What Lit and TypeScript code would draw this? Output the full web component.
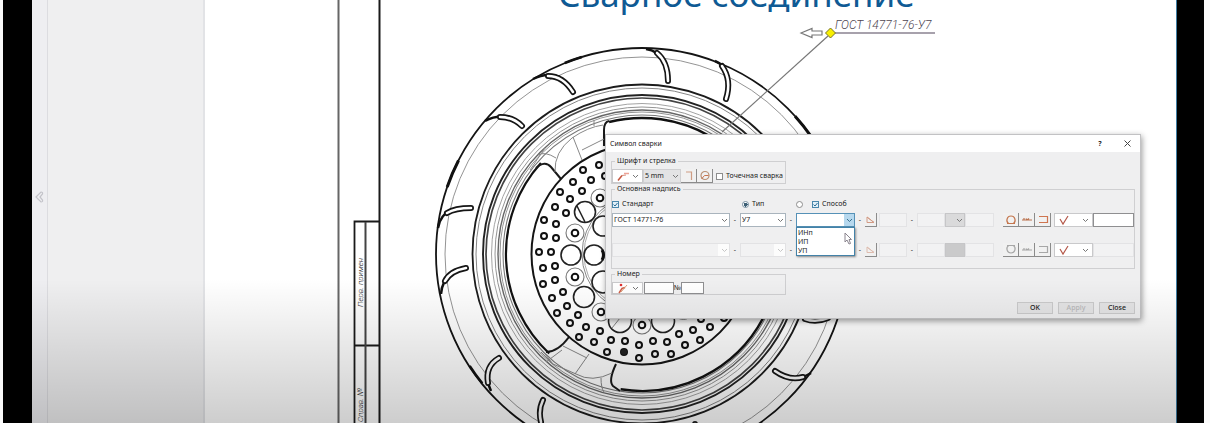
import { LitElement, html, svg, css } from "lit";
import { customElement, state } from "lit/decorators.js";

const CX = 642;
const CY = 254;

/* Concentric edges of the rim: radius, stroke width, colour. */
const RINGS: [number, number, string][] = [
  [206, 1.8, "#141414"],
  [197, 0.9, "#888"],
  [169.5, 1.8, "#1c1c1c"],
  [166, 0.9, "#777"],
  [159, 1.9, "#222"],
  [156, 1.7, "#444"],
  [150.5, 0.9, "#999"],
  [147, 0.9, "#888"],
  [144, 1.4, "#666"],
  [142, 0.9, "#888"],
  [139, 1.1, "#777"],
];

const SMALL_HOLES: [number, number][] = [
  [599, 165], [583, 170], [591, 180], [573, 182], [582, 191], [560, 192], [570, 199], [555, 207],
  [566, 213], [544, 220], [556, 224], [605, 176], [544, 236], [556, 238], [539, 252], [551, 252],
  [543, 268], [555, 266], [543, 284], [555, 280], [552, 298], [563, 292], [557, 313], [567, 306],
  [570, 323], [578, 315], [579, 337], [586, 327], [594, 342], [600, 331], [607, 352], [611, 340],
  [624, 352], [625, 341], [639, 345], [639, 358], [653, 341], [655, 354], [667, 342], [671, 354],
  [679, 334], [685, 345], [693, 330], [700, 340], [710, 327], [701, 319], [724, 318],
];

const BIG_HOLES: [number, number, number][] = [
  [571, 255, 10], [594, 255, 10], [584, 297, 10.5], [585, 212, 10.5],
  [603, 226, 10], [603, 282, 11], [620, 321, 11.5], [663, 321, 11.5],
];

const RINGED_HOLES: [number, number][] = [
  [575, 233], [575, 277], [600, 198], [601, 312], [642, 325],
];

/* Tread grooves: the taper on the outer edge, then the rounded slot. */
const GROOVES: [string, string][] = [
  ["M533 79 Q546 72 560 77", "M548 76 Q563 76 573 92"],
  ["M485 121 Q495 115 510 117", "M500 117 Q513 117 522 126"],
  ["M438 228 Q440 215 452 209", "M447 213 Q455 208 471 208"],
  ["M441 294 Q442 281 451 274", "M445 281 Q450 271 466 268"],
  ["M491 391 Q486 380 487 370", "M488 383 Q485 366 499 358"],
  ["M543 428 Q539 420 539 412", "M541 422 Q538 410 543 400"],
  ["M708 449 Q700 440 697 430", "M699 438 Q695 430 695 424"],
  ["M811 373 Q802 379 792 378", "M803 377 Q789 381 775 371"],
  ["M646 49 Q658 51 663 60", "M657 53 Q668 62 668 81"],
  ["M715 61 Q725 65 728 76", "M722 66 Q732 80 726 99"],
  ["M836 313 Q828 321 815 320", "M828 318 Q816 323 805 319"],
];

const point = (r: number, deg: number) => {
  const a = (deg * Math.PI) / 180;
  return `${(CX + r * Math.cos(a)).toFixed(1)} ${(CY + r * Math.sin(a)).toFixed(1)}`;
};
const arc = (r: number, from: number, to: number) =>
  `M${point(r, from)} A${r} ${r} 0 ${to - from > 180 ? 1 : 0} 1 ${point(r, to)}`;

@customElement("weld-drawing")
class WeldDrawing extends LitElement {
  static styles = css`
    :host { display: block; }
    svg { display: block; overflow: visible; }
    .note { font: italic 300 12px Roboto, sans-serif; fill: #4d4551; }
    .stamp { font: italic 300 8px Roboto, sans-serif; fill: #222; }
  `;

  render() {
    return html`<svg width="971" height="423" viewBox="205 0 971 423" fill="none" aria-label="Чертёж">
      <path d="M338.5 0V800" stroke="#666" stroke-width="2" />
      <path d="M379.5 0V800" stroke="#1a1a1a" stroke-width="2" />
      <path d="M354.500 800V221.500H380M354.500 345.500H380" stroke="#1a1a1a" stroke-width="1.800" />
      <path d="M365.500 222V800" stroke="#444" stroke-width="2" />
      <text class="stamp" transform="translate(363 307) rotate(-90)">Перв. примен</text>
      <text class="stamp" transform="translate(363 422) rotate(-90)">Справ. №</text>

      ${RINGS.map(([r, w, c]) => svg`<circle cx=${CX} cy=${CY} r=${r} stroke=${c} stroke-width=${w} />`)}
      <path d=${arc(206, 199, 207)} stroke="#111" stroke-width="3" />
      <path d=${arc(206, 318, 325)} stroke="#111" stroke-width="3" />
      <path d=${arc(205.5, 141, 147)} stroke="#111" stroke-width="2.5" />
      <path d=${arc(206, 248, 253)} stroke="#111" stroke-width="2.5" />

      <path d=${arc(136, 133, 222)} stroke="#111" stroke-width="2.2" />
      <path d=${arc(136, 256, 300)} stroke="#111" stroke-width="2.4" />
      <path d=${arc(137, 28, 99)} stroke="#111" stroke-width="2.4" />
      <path d="M536 168Q545 160 551 167L561 179" stroke="#1a1a1a" stroke-width="2" />
      <path d="M546 352Q558 352 569 337" stroke="#1a1a1a" stroke-width="2" />
      <path d="M609 121Q604 122 604 130V146" stroke="#1a1a1a" stroke-width="2" />
      <path d="M616 364Q608 381 613 386L620 391" stroke="#1a1a1a" stroke-width="2" />
      <g stroke="#888" stroke-width="1">
        <path d="M573 137L582 160M582 150L604 139M555 172Q554 152 572 138Q588 127 603 125" />
        <path d="M538 155Q545 151 556 158M594 120V126M530 170L545 148" />
        <path d="M563 346L587 358M589 354L575 374M545 354L553 364L576 374Q592 383 612 373M601 378Q601 388 604 392" />
        <path d="M541 352L554 365M546 362L562 350" />
      </g>

      <circle cx=${CX} cy=${CY} r="110.500" stroke="#151515" stroke-width="2" />
      <circle cx=${CX} cy=${CY} r="60" stroke="#888" stroke-width="1" />
      <circle cx=${CX} cy=${CY} r="58" stroke="#aaa" stroke-width="1" />
      ${BIG_HOLES.map(([x, y, r]) => svg`<circle cx=${x} cy=${y} r=${r} fill="#fff" stroke="#222" stroke-width="1.600" />`)}
      <path d="M577 206L585 222" stroke="#222" stroke-width="1.500" />
      <path d="M602 250Q605 255 602 260" stroke="#111" stroke-width="3" />
      <path d="M612 328L624 313M676 317Q684 322 690 317" stroke="#888" />
      ${RINGED_HOLES.map(([x, y]) => svg`
        <circle cx=${x} cy=${y} r="9" stroke="#777" stroke-width="1.100" />
        <circle cx=${x} cy=${y} r="3.300" stroke="#111" stroke-width="2" />`)}
      ${SMALL_HOLES.map(([x, y]) => svg`<circle cx=${x} cy=${y} r="3" stroke="#111" stroke-width="2" />`)}
      <circle cx="624" cy="352" r="3" fill="#222" />

      ${GROOVES.map(([taper, slot]) => svg`
        <path d=${taper} stroke="#111" stroke-width="2.500" />
        <path d=${slot} stroke="#151515" stroke-width="6" stroke-linecap="round" />
        <path d=${slot} stroke="#fff" stroke-width="2.600" stroke-linecap="round" />`)}

      <path d="M828 36L722 132" stroke="#777" stroke-width="1.200" />
      <path d="M834 33H935" stroke="#8a8290" stroke-width="1.500" />
      <path d="M801 33L812 28.500V31H822V35H812V37.500Z" fill="#fff" stroke="#777" stroke-width="1.200" />
      <path d="M830.500 28L835.500 33L830.500 38L825.500 33Z" fill="#f8ef00" stroke="#77722c" />
      <text class="note" x="835" y="29">ГОСТ 14771-76-У7</text>
    </svg>`;
  }
}

const chevron = html`<svg class="chev" width="7" height="5" viewBox="0 0 7 5" fill="none" stroke="#777" aria-hidden="true">
  <path d="M1 1L3.500 3.500L6 1" /></svg>`;

const cornerIcon = html`<svg width="12" height="11" viewBox="0 0 12 11" fill="none" aria-hidden="true">
  <path d="M3 2H8.500V10" stroke="#cf9d84" stroke-width="1.200" /></svg>`;
const circleIcon = html`<svg width="12" height="11" viewBox="0 0 12 11" fill="none" aria-hidden="true">
  <circle cx="6" cy="5.500" r="4" stroke="#b98f72" stroke-width="1.200" /><path d="M2.500 9L5.500 5.500H9.500" stroke="#c8744e" /></svg>`;
const arrowIcon = html`<svg width="14" height="11" viewBox="0 0 14 11" fill="none" aria-hidden="true">
  <path d="M2 9.500L6 4.500" stroke="#c4553e" stroke-width="1.500" /><path d="M6 4.500L10 4" stroke="#d88a78" /><path d="M8 2.500H13" stroke="#eda397" stroke-width="1.500" /></svg>`;
const numberIcon = html`<svg width="14" height="11" viewBox="0 0 14 11" fill="none" aria-hidden="true">
  <path d="M3 10L6 5.500L9 4.500" stroke="#d0604a" stroke-width="1.500" /><circle cx="5" cy="2" r="1.300" fill="#e02f2f" /><path d="M5 9L11 2" stroke="#d9a078" /></svg>`;
const angleIcon = html`<svg width="11" height="11" viewBox="0 0 11 11" fill="none" stroke="#d29a84" aria-hidden="true">
  <path d="M2 3V8.500H9ZM2 3L9 8.500" /></svg>`;
const loopIcon = html`<svg width="14" height="11" viewBox="0 0 14 11" fill="none" stroke="#c4764e" stroke-width="1.200" aria-hidden="true">
  <path d="M3 9.500H11M4.500 9.500C1.500 7 3 2 7 2S12.500 7 9.500 9.500" /></svg>`;
const loopDownIcon = html`<svg width="14" height="11" viewBox="0 0 14 11" fill="none" stroke="#777" stroke-width="1.200" aria-hidden="true">
  <path d="M3 1.500H11M4.500 1.500C1.500 4 3 9 7 9S12.500 4 9.500 1.500" /></svg>`;
const seam = (color: string) => html`<svg width="14" height="11" viewBox="0 0 14 11" fill="none" stroke=${color} stroke-width="1.200" aria-hidden="true">
  <path d="M2 6H12M4 4V6M6 4.500L7 6L9 4.500" /></svg>`;
const bracket = (color: string) => html`<svg width="14" height="11" viewBox="0 0 14 11" fill="none" stroke=${color} stroke-width="1.200" aria-hidden="true">
  <path d="M3 2.500H11.500V8.500H3" /></svg>`;
const checkIcon = html`<svg width="12" height="12" viewBox="0 0 12 12" fill="none" stroke="#b4584a" stroke-width="1.200" aria-hidden="true">
  <path d="M2 5L5 10L10 2" /></svg>`;

@customElement("weld-dialog")
class WeldDialog extends LitElement {
  @state() private method = "";

  static styles = css`
    :host { display: block; box-sizing: border-box; font: 7px/8px "Noto Sans", "Open Sans", sans-serif; color: #222;
      background: #efeff0; border: 1px solid #c2c2c4; box-shadow: 1px 2px 6px rgba(0, 0, 0, 0.4); }
    *, *::before { box-sizing: border-box; }
    button, input, select { font: inherit; color: inherit; margin: 0; padding: 0; border-radius: 0; min-width: 0; }
    .title { display: flex; align-items: center; justify-content: space-between; height: 17px; background: #fff; padding: 0 8px 0 4px; }
    .heading { margin: 0; font: inherit; }
    .tools { display: flex; gap: 17px; }
    .tool { display: grid; place-items: center; width: 10px; height: 12px; border: 0; background: none; font-weight: 700; }
    .body { display: flex; flex-direction: column; align-items: flex-start; gap: 1px; padding: 5px 5px 4px; }
    fieldset { margin: 0; padding: 4px 0 0; border: 1px solid #cfcfd1; min-width: 0; }
    legend { margin-left: 3px; padding: 0 2px; }
    .font { width: 175px; }
    .main { width: 100%; padding: 4px 0 11px; }
    .row { display: flex; align-items: stretch; height: 14px; }
    .number .row { height: 12px; }
    .number { width: 175px; }
    .icons { display: flex; }
    .pick { display: flex; align-items: center; justify-content: space-between; width: 31px; padding: 0 3px; background: #fff;
      border: 1px solid #c9c9cb; }
    .flat { display: grid; place-items: center; width: 16px; border: 0; border-right: 1px solid #8b8b8b; border-bottom: 1px solid #8b8b8b; background: #f1f1f1; }
    .small { width: 12px; }
    .flat:disabled svg { opacity: 0.6; }
    .combo { position: relative; display: flex; height: 14px; }
    .combo select { appearance: none; width: 100%; padding: 0 1px; background: #fff; border: 1px solid #a9b4bd; opacity: 1; outline: none; }
    .combo .chev { position: absolute; right: 2px; top: 5px; pointer-events: none; }
    .size { width: 38px; }
    .size select { background: #e3e3e4; border-color: #d0d0d2; }
    .off select { background: linear-gradient(to left, #fcfcfc 11px, #f2f2f3 11px); border-color: #e2e2e4; }
    .off .chev { opacity: 0.4; }
    .focus select { border-color: #5591b7; background: linear-gradient(to left, #b6d8ee 10px, #fff 10px); }
    .focus .chev { stroke: #38718f; }
    .grey select { background: #dadadb; border-color: #c6c6c8; }
    .dim select { background: #cacacb; border-color: #c6c6c8; }
    .dim .chev { display: none; }
    label { display: flex; align-items: center; gap: 3px; white-space: nowrap; }
    input[type="checkbox"], input[type="radio"] { appearance: none; flex: none; width: 7px; height: 7px; border: 1px solid #8d8d8d; background: #fff; }
    input[type="radio"] { border-radius: 50%; }
    input[type="radio"]:checked { background: radial-gradient(#3e6076 0 2px, #fff 2px); border-color: #7790a2; }
    input[type="checkbox"]:checked { border-color: #4b87ab; background: #e3f1f9 url("data:image/svg+xml,%3Csvg xmlns='http://www.w3.org/2000/svg' viewBox='0 0 5 5' fill='none' stroke='%23286b96'%3E%3Cpath d='M.5 2.500L2 4L4.500 1'/%3E%3C/svg%3E"); }
    .spot { margin-left: 3px; }
    .grid { display: grid; grid-template-columns: minmax(0, 1fr) 10px 46px 10px 59px 10px 12px 2px 28px 10px 28px 20px 29px 9px 51px 39px 41px; }
    .heads { grid-template-rows: 10px; padding: 2px 0 4px; }
    .first { grid-template-rows: 14px; padding-bottom: 16px; }
    .second { grid-template-rows: 14px; }
    .type { grid-column: 3; padding-left: 2px; }
    .way { grid-column: 5; display: flex; align-items: center; gap: 9px; }
    .dash { display: grid; place-items: center; }
    .box { width: 100%; border: 1px solid #8f8f91; background: #fff; outline: none; }
    .box:disabled { border-color: #e3e3e5; background: #f2f2f3; }
    .mark { width: 39px; }
    .short { width: 30px; margin-left: 1px; }
    .tiny { width: 23px; }
    .list { position: absolute; z-index: 1; top: 14px; left: 0; width: 100%; margin: 0; padding: 0 1px; list-style: none; background: #fff;
      border: 1px solid #4382a8; box-shadow: 1px 1px 2px rgba(0, 0, 0, 0.4); line-height: 9px; }
    .cursor { position: absolute; z-index: 2; right: 3px; top: 19px; }
    .actions { display: flex; justify-content: flex-end; gap: 5px; padding: 3px 5px 4px; }
    .action { width: 36px; height: 12px; border: 1px solid #cbcbcc; background: #e5e5e6; line-height: 8px; font-weight: 500; }
    .action:disabled { color: #b9b9bb; }
  `;

  private combo(label: string, value: string, cls = "") {
    return html`<span class="combo ${cls}">
      <select aria-label=${label} ?disabled=${cls === "off" || cls === "dim"}><option>${value}</option></select>${chevron}
    </span>`;
  }

  private tail(disabled: boolean) {
    return html`
      <span class="dash">-</span>
      <button class="flat small" aria-label="Катет" ?disabled=${disabled}>${angleIcon}</button>
      <span></span>
      <input class="box" aria-label="Размер катета" disabled />
      <span class="dash">-</span>
      <input class="box" aria-label="Длина" disabled />
      ${this.combo("Шаг", "", disabled ? "dim" : "grey")}
      <input class="box" aria-label="Интервал" disabled />
      <span></span>
      <span class="icons">
        <button class="flat" aria-label="Контур" ?disabled=${disabled}>${disabled ? loopDownIcon : loopIcon}</button>
        <button class="flat" aria-label="Шов" ?disabled=${disabled}>${seam(disabled ? "#777" : "#bb7350")}</button>
        <button class="flat" aria-label="Незамкнутый контур" ?disabled=${disabled}>${bracket(disabled ? "#777" : "#cf7550")}</button>
      </span>
      <button class="pick mark" aria-label="Шероховатость">${checkIcon}${chevron}</button>
      <input class="box" aria-label="Параметр" ?disabled=${disabled} />`;
  }

  render() {
    return html`
      <header class="title">
        <h2 class="heading">Символ сварки</h2>
        <div class="tools">
          <button class="tool" aria-label="Справка">?</button>
          <button class="tool" aria-label="Закрыть"><svg width="7" height="7" viewBox="0 0 7 7" stroke="#444"><path d="M.5 .5L6.500 6.500M6.500 .5L.5 6.500" /></svg></button>
        </div>
      </header>
      <div class="body">
        <fieldset class="font">
          <legend>Шрифт и стрелка</legend>
          <div class="row">
            <button class="pick" aria-label="Стрелка">${arrowIcon}${chevron}</button>
            ${this.combo("Высота шрифта", "5 mm", "size")}
            <button class="flat" aria-label="Излом">${cornerIcon}</button>
            <button class="flat" aria-label="По контуру">${circleIcon}</button>
            <label class="spot"><input type="checkbox" />Точечная сварка</label>
          </div>
        </fieldset>
        <fieldset class="main">
          <legend>Основная надпись</legend>
          <div class="grid heads">
            <label><input type="checkbox" checked />Стандарт</label>
            <label class="type"><input type="radio" name="mode" checked />Тип</label>
            <div class="way">
              <input type="radio" name="mode" aria-label="По способу" />
              <label><input type="checkbox" checked />Способ</label>
            </div>
          </div>
          <div class="grid first">
            ${this.combo("Стандарт", "ГОСТ 14771-76")}
            <span class="dash">-</span>
            ${this.combo("Тип", "У7")}
            <span class="dash">-</span>
            <span class="combo focus">
              <select aria-label="Способ"><option>${this.method}</option></select>${chevron}
              <ul class="list" role="listbox" aria-label="Способ сварки">
                ${["ИНп", "ИП", "УП"].map((m) => html`<li role="option" aria-selected=${this.method === m} @click=${() => (this.method = m)}>${m}</li>`)}
              </ul>
              <svg class="cursor" width="8" height="13" viewBox="0 0 8 13" fill="#fff" stroke="#8a848e" aria-hidden="true">
                <path d="M1 1V10L3 8L5 12L6.500 11.500L5 7.500H7.500Z" /></svg>
            </span>
            ${this.tail(false)}
          </div>
          <div class="grid second">
            ${this.combo("Стандарт, вторая строка", "", "off")}
            <span class="dash">-</span>
            ${this.combo("Тип, вторая строка", "", "off")}
            <span class="dash">-</span>
            ${this.combo("Способ, вторая строка", "", "off")}
            ${this.tail(true)}
          </div>
        </fieldset>
        <fieldset class="number">
          <legend>Номер</legend>
          <div class="row">
            <button class="pick" aria-label="Вид номера">${numberIcon}${chevron}</button>
            <input class="box short" aria-label="Количество" />
            <label for="num">№</label>
            <input class="box tiny" id="num" />
          </div>
        </fieldset>
      </div>
      <footer class="actions">
        <button class="action">OK</button>
        <button class="action" disabled>Apply</button>
        <button class="action">Close</button>
      </footer>`;
  }
}

@customElement("app-root")
class AppRoot extends LitElement {
  static styles = css`
    :host { display: grid; grid-template-columns: 29px 16px 157px minmax(0, 1fr) 27px; min-height: 100vh; padding: 0 6px 0 3px;
      box-sizing: border-box; background: #fafafa; position: relative; }
    .bezel { background: #000; z-index: 3; }
    .rail { display: flex; align-items: center; justify-content: center; padding-bottom: 29px; background: #eeeef1; border-right: 1px solid #dcdce0; box-sizing: border-box; }
    .fold { display: grid; padding: 0; border: 0; background: none; }
    .panel { background: #efeff0; border-right: 2px solid #e2e3e6; box-sizing: border-box; }
    .sheet { position: relative; overflow: hidden; background: #fff; border-right: 1px solid #3f7da3; }
    .caption { position: absolute; left: 353px; top: -30px; margin: 0; font: 400 35px/48px "Noto Sans", sans-serif; color: #0f5a94; white-space: nowrap; }
    .window { position: absolute; left: 400px; top: 134px; width: 536px; }
    .drawing { position: absolute; left: 0; top: 0; }
    .shade { position: absolute; inset: 66% 33px 0 32px; z-index: 2; pointer-events: none;
      background: linear-gradient(rgba(0, 0, 0, 0), rgba(0, 0, 0, 0.04) 20%, rgba(0, 0, 0, 0.195)); }
  `;

  render() {
    return html`
      <div class="bezel"></div>
      <aside class="rail">
        <button class="fold" aria-label="Свернуть панель">
          <svg width="9" height="12" viewBox="0 0 9 12" fill="none" stroke="#c3c3c9" stroke-width="1.200"><path d="M1 6L6 1Q8 1 7.500 3L5 6L7.500 9Q8 11 6 11Z" /></svg>
        </button>
      </aside>
      <div class="panel"></div>
      <main class="sheet">
        <weld-drawing class="drawing"></weld-drawing>
        <h1 class="caption">Сварное соединение</h1>
        <weld-dialog class="window"></weld-dialog>
      </main>
      <div class="bezel"></div>
      <div class="shade"></div>`;
  }
}
